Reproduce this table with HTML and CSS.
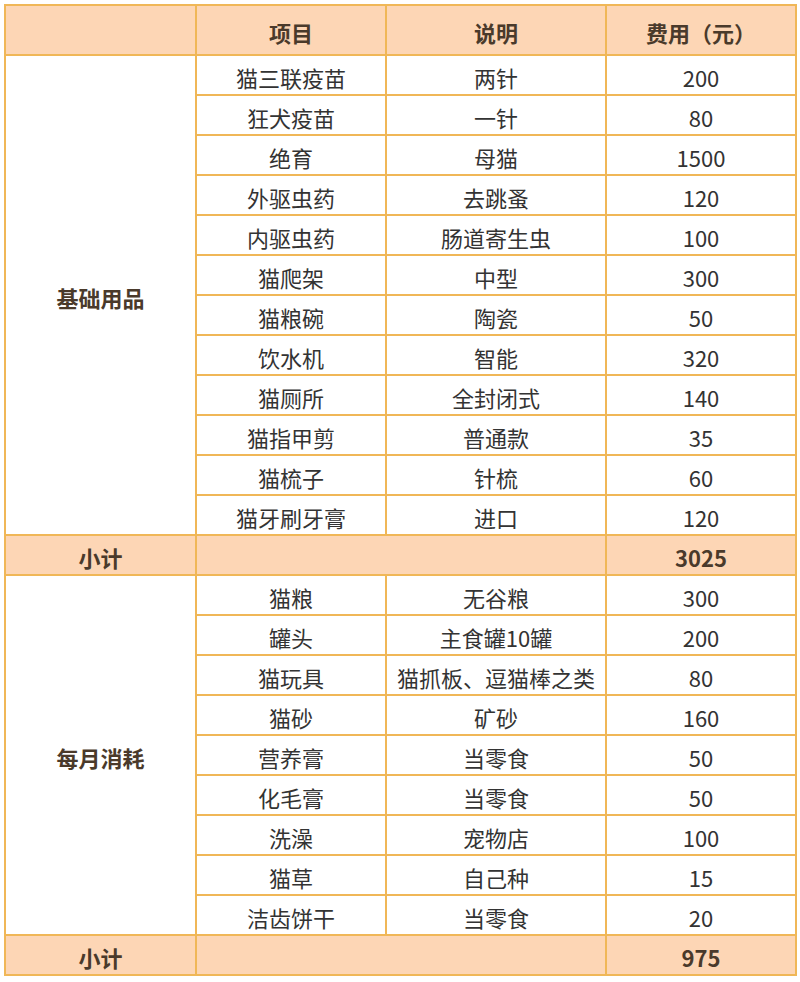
FILE: index.html
```html
<!DOCTYPE html>
<html lang="zh-CN">
<head>
<meta charset="utf-8">
<title>养猫费用</title>
<link rel="stylesheet" href="styles.css">
</head>
<body>
<table class="cost">
  <colgroup>
    <col class="c1"><col class="c2"><col class="c3"><col class="c4">
  </colgroup>
  <thead>
    <tr class="head">
      <th></th><th>项目</th><th>说明</th><th>费用（元）</th>
    </tr>
  </thead>
  <tbody>
    <tr><td class="group" rowspan="12">基础用品</td><td>猫三联疫苗</td><td>两针</td><td>200</td></tr>
    <tr><td>狂犬疫苗</td><td>一针</td><td>80</td></tr>
    <tr><td>绝育</td><td>母猫</td><td>1500</td></tr>
    <tr><td>外驱虫药</td><td>去跳蚤</td><td>120</td></tr>
    <tr><td>内驱虫药</td><td>肠道寄生虫</td><td>100</td></tr>
    <tr><td>猫爬架</td><td>中型</td><td>300</td></tr>
    <tr><td>猫粮碗</td><td>陶瓷</td><td>50</td></tr>
    <tr><td>饮水机</td><td>智能</td><td>320</td></tr>
    <tr><td>猫厕所</td><td>全封闭式</td><td>140</td></tr>
    <tr><td>猫指甲剪</td><td>普通款</td><td>35</td></tr>
    <tr><td>猫梳子</td><td>针梳</td><td>60</td></tr>
    <tr><td>猫牙刷牙膏</td><td>进口</td><td>120</td></tr>
    <tr class="sub"><td>小计</td><td colspan="2"></td><td>3025</td></tr>
    <tr><td class="group" rowspan="9">每月消耗</td><td>猫粮</td><td>无谷粮</td><td>300</td></tr>
    <tr><td>罐头</td><td>主食罐10罐</td><td>200</td></tr>
    <tr><td>猫玩具</td><td>猫抓板、逗猫棒之类</td><td>80</td></tr>
    <tr><td>猫砂</td><td>矿砂</td><td>160</td></tr>
    <tr><td>营养膏</td><td>当零食</td><td>50</td></tr>
    <tr><td>化毛膏</td><td>当零食</td><td>50</td></tr>
    <tr><td>洗澡</td><td>宠物店</td><td>100</td></tr>
    <tr><td>猫草</td><td>自己种</td><td>15</td></tr>
    <tr><td>洁齿饼干</td><td>当零食</td><td>20</td></tr>
    <tr class="sub"><td>小计</td><td colspan="2"></td><td>975</td></tr>
  </tbody>
</table>
</body>
</html>
```

FILE: styles.css
```css
html, body {
  margin: 0;
  padding: 0;
  background: #ffffff;
}

body {
  padding: 4px 0 0 4px;
  font-family: "Noto Sans CJK SC", "Noto Sans", sans-serif;
  color: #333333;
}

.cost {
  border-collapse: collapse;
  table-layout: fixed;
  width: 791px;
  font-size: 22px;
}

.c1 { width: 191px; }
.c2 { width: 190px; }
.c3 { width: 220px; }
.c4 { width: 190px; }

.cost th,
.cost td {
  border: 2px solid #f0b757;
  text-align: center;
  vertical-align: middle;
  padding: 3px 0 0;
  line-height: 1;
  white-space: nowrap;
}

.cost td {
  height: 35px;
}

.head th {
  height: 45px;
  background: #fdd6b5;
  font-weight: 700;
  color: #4a3a2b;
}

.group {
  font-weight: 700;
  color: #4a3a2b;
}

.sub td {
  background: #fdd6b5;
  font-weight: 700;
  color: #4a3a2b;
}
```
